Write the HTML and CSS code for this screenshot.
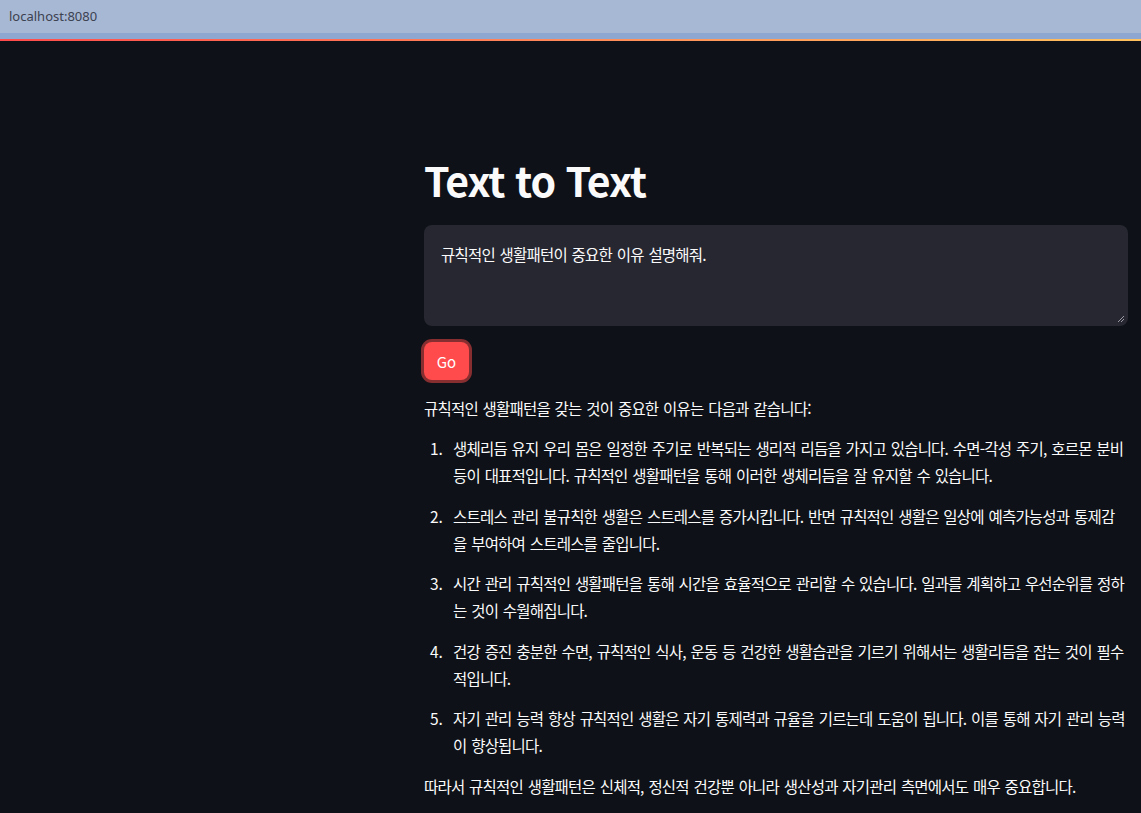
FILE: index.html
```html
<!DOCTYPE html>
<html lang="ko">
<head>
<meta charset="utf-8">
<title>Text to Text</title>
<link rel="stylesheet" href="styles.css">
</head>
<body>
<div class="browser-bar"><span class="url">localhost:8080</span></div>
<div class="browser-strip"></div>
<div class="decoration"></div>
<main class="app">
  <div class="block">
    <h1 class="title">Text to Text</h1>
    <div class="textarea-wrap">
      <div class="textarea">규칙적인 생활패턴이 중요한 이유 설명해줘.</div>
      <svg class="grip" width="8" height="8" viewBox="0 0 8 8"><path d="M7 1 L1 7 M7 4 L4 7" stroke="#9a9aa2" stroke-width="1"/></svg>
    </div>
    <div class="btn-row"><button class="go">Go</button></div>
    <div class="md">
      <p>규칙적인 생활패턴을 갖는 것이 중요한 이유는 다음과 같습니다:</p>
      <ol>
        <li><span>생체리듬 유지 우리 몸은 일정한 주기로 반복되는 생리적 리듬을 가지고 있습니다. 수면-각성 주기, 호르몬 분비 등이 대표적입니다. 규칙적인 생활패턴을 통해 이러한 생체리듬을 잘 유지할 수 있습니다.</span></li>
        <li><span>스트레스 관리 불규칙한 생활은 스트레스를 증가시킵니다. 반면 규칙적인 생활은 일상에 예측가능성과 통제감을 부여하여 스트레스를 줄입니다.</span></li>
        <li><span>시간 관리 규칙적인 생활패턴을 통해 시간을 효율적으로 관리할 수 있습니다. 일과를 계획하고 우선순위를 정하는 것이 수월해집니다.</span></li>
        <li><span>건강 증진 충분한 수면, 규칙적인 식사, 운동 등 건강한 생활습관을 기르기 위해서는 생활리듬을 잡는 것이 필수적입니다.</span></li>
        <li><span>자기 관리 능력 향상 규칙적인 생활은 자기 통제력과 규율을 기르는데 도움이 됩니다. 이를 통해 자기 관리 능력이 향상됩니다.</span></li>
      </ol>
      <p>따라서 규칙적인 생활패턴은 신체적, 정신적 건강뿐 아니라 생산성과 자기관리 측면에서도 매우 중요합니다.</p>
    </div>
  </div>
</main>
</body>
</html>
```

FILE: styles.css
```css
*, *::before, *::after { box-sizing: border-box; }
html, body {
  margin: 0;
  padding: 0;
  background: #0e1117;
  height: 100%;
  overflow: hidden;
}
body {
  font-family: "Noto Sans CJK KR", "Noto Sans", sans-serif;
  color: #fafafa;
}
.browser-bar {
  height: 33px;
  background: #a7b8d5;
  display: flex;
  align-items: center;
  padding-left: 9px;
  padding-bottom: 2px;
}
.url {
  font-family: "Noto Sans", "DejaVu Sans", sans-serif;
  font-size: 13px;
  color: #3c4250;
}
.browser-strip {
  height: 6px;
  background: #8ea7d0;
}
.decoration {
  height: 2px;
  background: linear-gradient(90deg, #ff4b4b 0%, #ff8a5a 50%, #ffc25e 100%);
}
.app {
  padding: 0 13px 0 424px;
}
.block {
  width: 704px;
  padding-top: 114px;
}
.title {
  margin: 0;
  font-size: 41px;
  font-weight: 700;
  line-height: 49px;
  letter-spacing: -1px;
}
.textarea-wrap {
  position: relative;
  margin-top: 21px;
}
.textarea {
  background: #262730;
  border-radius: 8px;
  height: 101px;
  padding: 16px 17px;
  font-size: 15.5px;
  line-height: 26px;
  letter-spacing: -0.8px;
  word-spacing: 1.2px;
  color: #fafafa;
}
.grip {
  position: absolute;
  right: 3px;
  bottom: 3px;
}
.btn-row {
  margin-top: 16px;
  height: 38px;
}
.go {
  display: block;
  font-family: inherit;
  background: #ff4b4b;
  color: #fff;
  border: none;
  border-radius: 8px;
  width: 45px;
  height: 38px;
  font-size: 15px;
  padding: 0;
  box-shadow: 0 0 0 3px rgba(255, 75, 75, 0.5);
}
.md {
  margin-top: 15px;
  padding-right: 3px;
  font-size: 15.5px;
  line-height: 27px;
  letter-spacing: -0.8px;
  word-spacing: 1.2px;
}
.md p {
  margin: 0 0 13px;
}
.md ol {
  margin: 0 0 14px;
  padding: 0;
  list-style: none;
  counter-reset: item;
}
.md li {
  counter-increment: item;
  display: flex;
  margin-bottom: 13.5px;
}
.md li::before {
  content: counter(item) ".";
  flex: 0 0 29px;
  padding-left: 6px;
  letter-spacing: 0;
}
.md li span {
  flex: 1;
}
```
